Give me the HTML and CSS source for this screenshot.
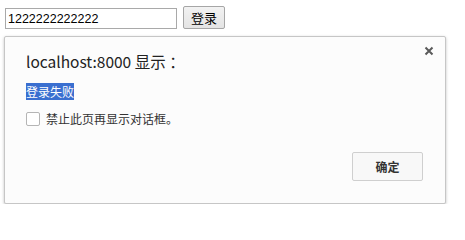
FILE: index.html
```html
<!DOCTYPE html>
<html>
<head>
<meta charset="utf-8">
<link rel="stylesheet" href="styles.css">
</head>
<body>
<div class="form">
  <input class="field" type="text" value="1222222222222">
  <button class="login">登录</button>
</div>
<div class="dialog">
  <div class="close">
    <svg width="10" height="10" viewBox="0 0 10 10"><path d="M1.5 1.5 L8.5 8.5 M8.5 1.5 L1.5 8.5" stroke="#5a5a5a" stroke-width="2" fill="none"/></svg>
  </div>
  <div class="title">localhost:8000 显示 ：</div>
  <div class="msg"><span class="sel">登录失败</span></div>
  <label class="check"><span class="box"></span><span>禁止此页再显示对话框。</span></label>
  <div class="actions"><button class="ok">确定</button></div>
</div>
</body>
</html>
```
FILE: styles.css
```css
html, body { margin: 0; padding: 0; background: #fff; }
body { font-family: "Noto Sans CJK SC", "Noto Sans", sans-serif; color: #222; }
.form { display: flex; align-items: flex-start; gap: 6px; padding: 6px 0 0 5px; height: 30px; box-sizing: border-box; }
.field {
  margin: 2px 0 0 0; width: 172px; height: 21px; box-sizing: border-box;
  border: 1px solid #a9a9a9; padding: 0 2px; font-family: "Liberation Sans", Arial, sans-serif; font-size: 12.5px; color: #000; background: #fff; outline: none;
}
.login {
  width: 42px; height: 23px; box-sizing: border-box; margin: 0; padding: 0;
  border: 1px solid #a6a6a6; border-radius: 2px; background: linear-gradient(#f2f2f2, #e4e4e4);
  font-family: "Noto Sans CJK SC", sans-serif; font-size: 13px; color: #000; line-height: 19px;
}
.dialog {
  position: relative; margin: 6px 0 0 4px; width: 442px; height: 168px; box-sizing: border-box;
  background: #fcfcfc; border: 1px solid #c6c6c6; border-radius: 2px;
  box-shadow: 0 1px 3px rgba(0,0,0,0.25);
  padding: 12px 22px 0 21px; display: flex; flex-direction: column;
}
.close { position: absolute; right: 11px; top: 9px; width: 10px; height: 10px; }
.close svg { display: block; }
.title { font-size: 15.5px; line-height: 22px; color: #222; margin-top: 1px; }
.msg { margin-top: 12px; font-size: 12px; line-height: 15px; height: 15px; }
.sel { background: #3a6fd0; color: #fff; }
.check { display: flex; align-items: center; gap: 6px; margin-top: 12px; font-size: 12px; color: #333; line-height: 16px; }
.box { width: 12px; height: 12px; border: 1px solid #b5b5b5; border-radius: 2px; background: #fff; }
.actions { display: flex; justify-content: flex-end; margin-top: 25px; }
.ok {
  width: 71px; height: 29px; box-sizing: border-box; margin: 0;
  border: 1px solid #cfcfcf; border-radius: 2px; background: #f8f8f8;
  font-family: "Noto Sans CJK SC", sans-serif; font-size: 12px; font-weight: bold; color: #333;
}
```
